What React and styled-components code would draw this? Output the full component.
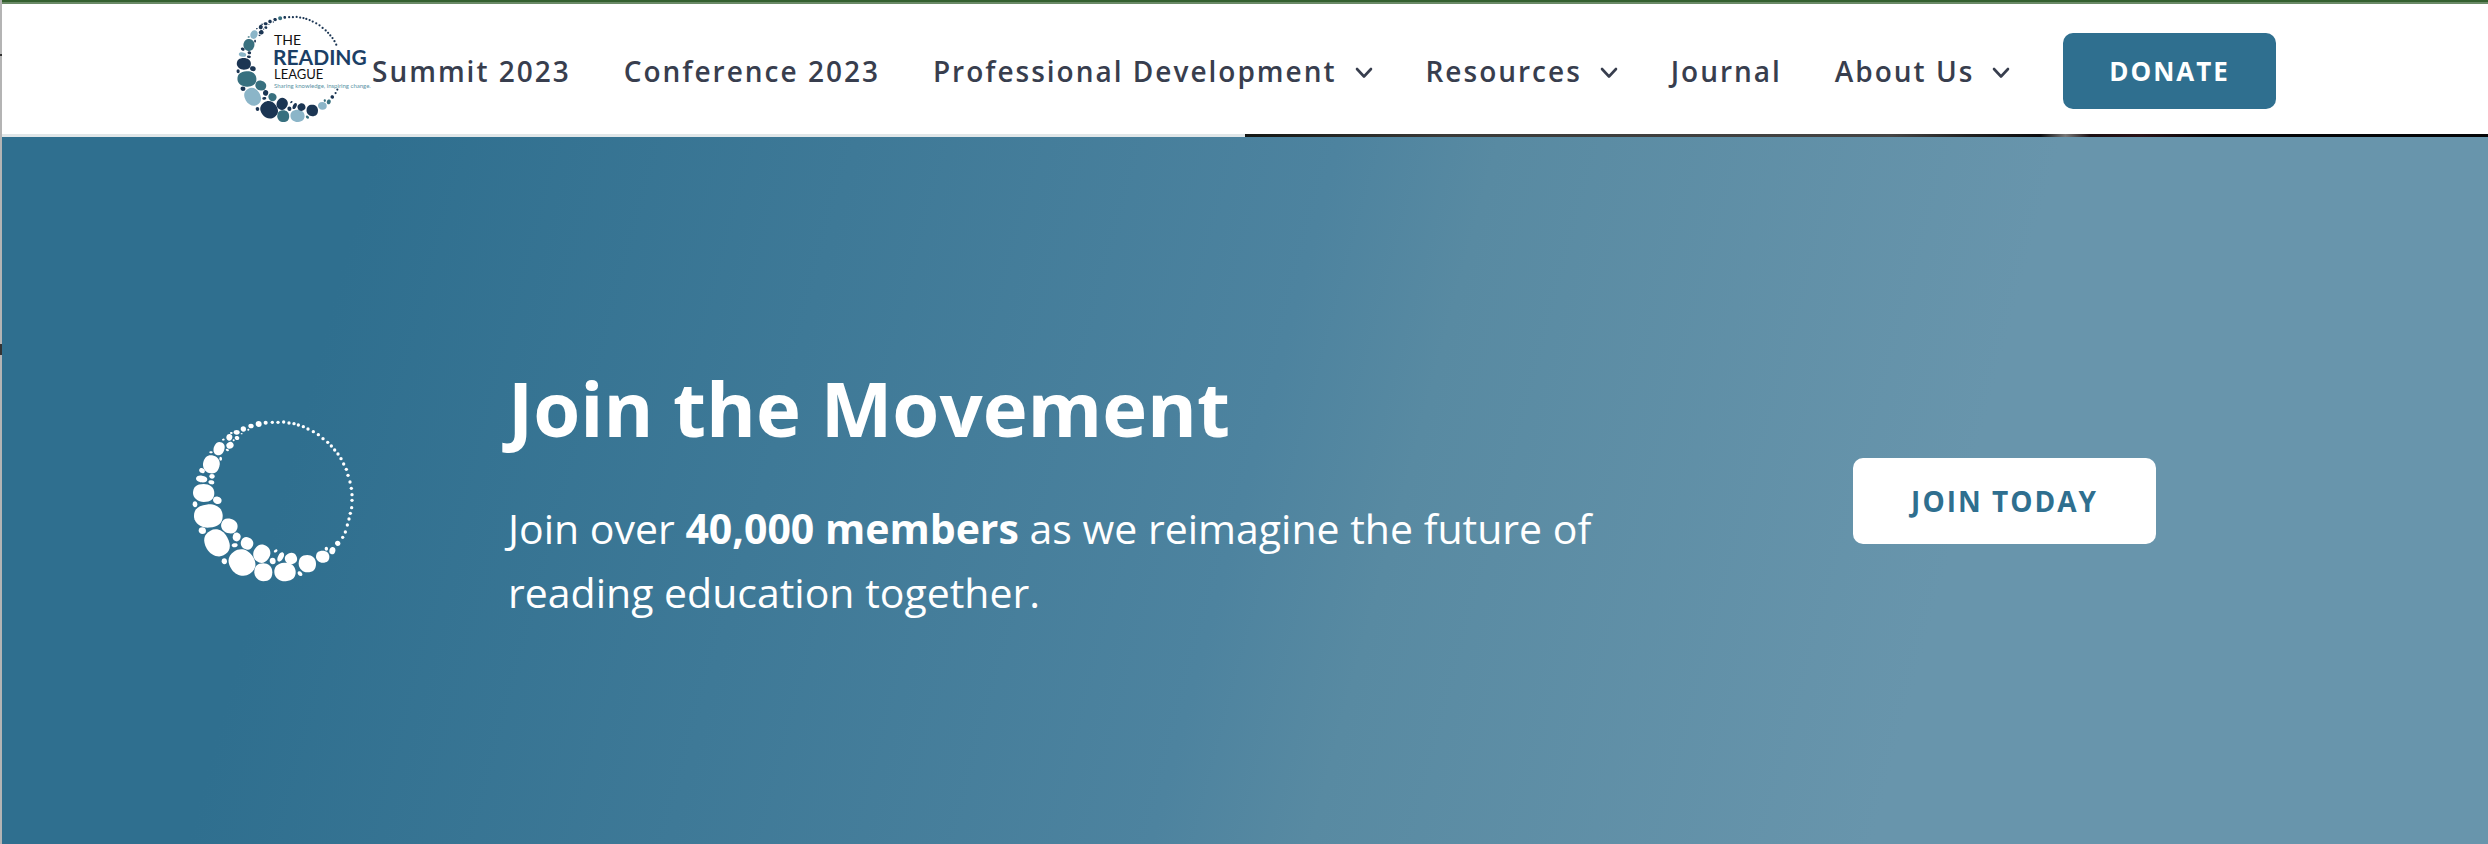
import React from 'react';
import styled, { createGlobalStyle } from 'styled-components';

const GlobalStyle = createGlobalStyle`
  * {
    box-sizing: border-box;
  }

  body {
    margin: 0;
    font-family: 'Open Sans', 'Noto Sans', sans-serif;
    background: #fff;
  }
`;

const Page = styled.div`
  display: flex;
  flex-direction: column;
  min-height: 100vh;
  padding-left: 2px;
  background: linear-gradient(
      #b4b4b4 54px,
      #333 54px,
      #333 56px,
      #b4b4b4 56px,
      #b4b4b4 344px,
      #333 344px,
      #333 355px,
      #b4b4b4 355px
    )
    left top / 2px 100% no-repeat;
`;

const TopStrip = styled.div`
  height: 4px;
  background: linear-gradient(#34602f 50%, #6a8a66 50%);
`;

const Header = styled.header`
  display: flex;
  align-items: center;
  padding: 8px 212px 8px 232px;
  background: #fff;
`;

const LogoLink = styled.a`
  display: block;
  flex: none;
  width: 138px;
  height: 114px;

  svg {
    display: block;
    overflow: visible;
  }
`;

const Nav = styled.nav`
  flex: 1;
  display: flex;
  align-items: center;
  justify-content: space-between;
  padding-top: 4px;
`;

const NavLink = styled.a`
  display: flex;
  align-items: center;
  gap: 18px;
  color: #383e4e;
  font-size: 28px;
  font-weight: 600;
  line-height: 40px;
  letter-spacing: 2px;
  text-decoration: none;
  white-space: nowrap;

  svg {
    margin-top: 4px;
  }
`;

const Button = styled.button`
  flex: none;
  padding: ${(props) => (props.$light ? '24px 58px' : '19px 46px')};
  border: 0;
  border-radius: 10px;
  background: ${(props) => (props.$light ? '#fff' : '#2f6f8f')};
  color: ${(props) => (props.$light ? '#2f6f8f' : '#fff')};
  font-family: inherit;
  font-size: ${(props) => (props.$light ? 28 : 26)}px;
  font-weight: 700;
  line-height: 38px;
  letter-spacing: 2px;
  white-space: nowrap;
  cursor: pointer;
`;

const Divider = styled.div`
  height: 3px;
  background: linear-gradient(
    90deg,
    #e0e6e8 50%,
    #141714 50%,
    #3a3a38 58%,
    #444 76%,
    #222 79%,
    #0c0c0e 82%,
    #777 83%,
    #1c0f12 84%,
    #2a1216 86%,
    #050507 89%
  );
`;

const Hero = styled.section`
  flex: 1;
  display: flex;
  align-items: center;
  padding: 80px 332px 60px 188px;
  background: linear-gradient(105deg, #2f6f8f 14%, #4d839f 50%, #588aa2 56%, #6895ac 77%);
`;

const HeroMark = styled.div`
  flex: none;
  width: 318px;

  svg {
    display: block;
  }
`;

const HeroText = styled.div`
  flex: 1;
  padding-bottom: 16px;
  color: #fff;
`;

const Title = styled.h2`
  margin: 0 0 42px;
  font-size: 76px;
  font-weight: 700;
  line-height: 92px;
`;

const Lead = styled.p`
  max-width: 1120px;
  margin: 0;
  font-size: 41px;
  line-height: 64px;
`;

// cx, cy, rx, ry, rotation, tone
const pebbles = [
  [72, 281, 32, 27, 0, 0],
  [86, 350, 43, 35, -5, 1],
  [112, 431, 35, 42, -28, 2],
  [187, 490, 37, 41, -35, 0],
  [95, 195, 25, 27, 15, 1],
  [118, 148, 16, 20, 25, 2],
  [149, 380, 25, 22, 15, 1],
  [202, 432, 19, 18, 25, 1],
  [246, 463, 25, 27, 35, 0],
  [251, 519, 27, 27, 0, 1],
  [316, 518, 32, 28, -5, 2],
  [334, 478, 18, 17, -25, 0],
  [383, 493, 26, 26, 0, 0],
  [429, 472, 20, 18, 0, 2],
  [458, 454, 9, 11, 20, 1],
  [440, 448, 5, 6, 0, 1],
  [474, 432, 8, 8, 0, 0],
  [66, 239, 17, 10, 5, 2],
  [67, 214, 9, 7, 25, 0],
  [97, 231, 8, 7, 0, 0],
  [95, 249, 9, 6, 10, 0],
  [123, 178, 4, 6, 0, 0],
  [94, 159, 5, 3, 0, 1],
  [113, 303, 13, 11, 10, 0],
  [46, 315, 7, 9, 0, 0],
  [68, 394, 11, 10, 0, 0],
  [171, 413, 12, 13, 20, 0],
  [165, 438, 9, 6, -10, 0],
  [134, 486, 8, 9, 0, 0],
  [279, 485, 9, 10, 0, 0],
  [303, 473, 8, 15, 30, 0],
  [288, 455, 6, 4, -40, 0],
  [361, 523, 6, 8, -40, 1],
  [149, 114, 9, 10, 20, 0],
  [151, 138, 11, 10, -30, 0],
  [171, 99, 9, 7, 0, 0],
  [172, 116, 7, 6, 20, 0],
  [191, 89, 8, 8, 0, 0],
  [214, 80, 8, 7, 0, 0],
  [237, 74, 9, 9, 0, 1],
  [258, 70, 6, 6, 0, 0],
  [131, 121, 4, 3, -20, 0],
  [143, 152, 5, 3, 20, 0],
  [162, 123, 3, 3, 0, 0],
  [186, 103, 3, 2, 0, 0],
  [206, 91, 3, 3, 0, 0],
  [155, 101, 4, 3, 0, 0],
];

const dots = [
  [278, 69], [295, 69], [312, 68], [328, 71], [343, 73], [356, 77], [371, 82],
  [385, 89], [401, 97], [416, 106], [430, 118], [444, 129], [455, 140],
  [465, 152], [475, 164], [484, 178], [492, 194], [500, 210], [505, 228],
  [511, 248], [515, 267], [517, 286], [517, 303], [516, 325], [512, 342],
  [508, 359], [503, 377], [497, 398], [489, 414],
];

const tones = ['#1b3553', '#38707f', '#8bb5c8'];

// a slightly lopsided oval, fuller in the corners than an ellipse
const pebblePath = (rx, ry) => {
  const a = rx * 0.66;
  const b = ry * 0.66;
  const c = rx * 0.52;
  const d = ry * 0.54;
  return `M0 ${-ry}C${c} ${-ry} ${rx} ${-b} ${rx} 0C${rx} ${b} ${a} ${ry} 0 ${ry}C${-c} ${ry} ${-rx} ${d} ${-rx} 0C${-rx} ${-b} ${-a} ${-ry} 0 ${-ry}Z`;
};

const StoneRing = ({ mono, openRight }) => (
  <g>
    {pebbles.map(([cx, cy, rx, ry, turn, tone]) => (
      <path
        key={`${cx}-${cy}`}
        d={pebblePath(rx, ry)}
        transform={`translate(${cx} ${cy}) rotate(${turn})`}
        fill={mono ? '#fff' : tones[tone]}
      />
    ))}
    {dots
      .filter(([, y]) => !openRight || y < 205 || y > 390)
      .map(([x, y]) => (
        <circle key={`${x}-${y}`} cx={x} cy={y} r="5" fill={mono ? '#fff' : tones[0]} />
      ))}
  </g>
);

const LogoName = styled.text`
  font-family: Lato, sans-serif;
  font-size: ${(props) => props.$size}px;
  font-weight: ${(props) => props.$weight || 400};
  fill: ${(props) => props.$fill || '#111'};
`;

const HeaderLogo = () => (
  <svg width="138" height="114" viewBox="0 0 138 114" role="img" aria-label="The Reading League">
    <g transform="translate(-6 -10) scale(0.22)">
      <StoneRing openRight />
    </g>
    <LogoName x="40" y="33" $size={14}>THE</LogoName>
    <LogoName x="39" y="53" $size={21} $weight={700} $fill="#1b3f66">READING</LogoName>
    <LogoName x="40" y="67" $size={13}>LEAGUE</LogoName>
    <LogoName x="40" y="76" $size={6} $fill="#5b93a5">Sharing knowledge, inspiring change.</LogoName>
  </svg>
);

const Chevron = () => (
  <svg width="18" height="12" viewBox="0 0 18 12" fill="none" aria-hidden="true">
    <path d="M2 2l7 7.500l7-7.500" stroke="#383e4e" strokeWidth="2.600" strokeLinecap="round" strokeLinejoin="round" />
  </svg>
);

const links = [
  { label: 'Summit 2023' },
  { label: 'Conference 2023' },
  { label: 'Professional Development', menu: true },
  { label: 'Resources', menu: true },
  { label: 'Journal' },
  { label: 'About Us', menu: true },
];

const App = () => {
  return (
    <>
      <GlobalStyle />
      <Page>
        <TopStrip />
        <Header>
          <LogoLink href="#">
            <HeaderLogo />
          </LogoLink>
          <Nav>
            {links.map((link) => (
              <NavLink key={link.label} href="#">
                {link.label}
                {link.menu && <Chevron />}
              </NavLink>
            ))}
            <Button type="button">DONATE</Button>
          </Nav>
        </Header>
        <Divider />
        <Hero>
          <HeroMark>
            <svg width="166" height="166" viewBox="31 56 498 498" aria-hidden="true">
              <StoneRing mono />
            </svg>
          </HeroMark>
          <HeroText>
            <Title>Join the Movement</Title>
            <Lead>
              Join over <strong>40,000 members</strong> as we reimagine the future of reading education together.
            </Lead>
          </HeroText>
          <Button type="button" $light>JOIN TODAY</Button>
        </Hero>
      </Page>
    </>
  );
};

export default App;
